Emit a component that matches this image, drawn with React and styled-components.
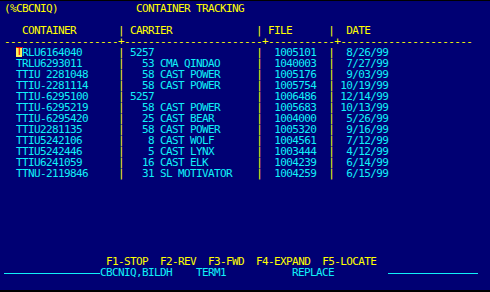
import React from 'react';
import styled, { createGlobalStyle } from 'styled-components';

const GlobalStyle = createGlobalStyle`
  html, body {
    margin: 0;
    padding: 0;
    background: #000;
  }
`;

const YELLOW = '#ffff00';
const CYAN = '#10f0f8';
const CELL = 6;

// Terminal screen, 6px cells on an 11px row grid
const Screen = styled.div`
  box-sizing: border-box;
  width: 490px;
  height: 289px;
  margin-top: 1px;
  padding: 1.5px 0 0 4px;
  background: #000073;
  font-family: "DejaVu Sans Mono", "Liberation Mono", monospace;
  font-size: 11px;
  letter-spacing: -0.62px;
  line-height: 11px;
  overflow: hidden;
`;

const Line = styled.div`
  height: 11px;
  white-space: pre;
`;

const Seg = styled.span`
  color: ${(p) => (p.$tone === 'cyan' ? CYAN : YELLOW)};
`;

const Cursor = styled.span`
  display: inline-block;
  width: ${CELL}px;
  height: 10px;
  line-height: 10px;
  vertical-align: top;
  text-align: center;
  letter-spacing: 0;
  background: #ffef5a;
  color: #e00000;
`;

const Rule = styled.span`
  display: inline-block;
  width: ${(p) => p.$cols * CELL}px;
  height: 1px;
  vertical-align: 2px;
  background: ${CYAN};
`;

const rows = [
  ['TRLU6164040', '5257', '', '1005101', '8/26/99'],
  ['TRLU6293011', '53', 'CMA QINDAO', '1040003', '7/27/99'],
  ['TTIU 2281048', '58', 'CAST POWER', '1005176', '9/03/99'],
  ['TTIU-2281114', '58', 'CAST POWER', '1005754', '10/19/99'],
  ['TTIU-6295100', '5257', '', '1006486', '12/14/99'],
  ['TTIU-6295219', '58', 'CAST POWER', '1005683', '10/13/99'],
  ['TTIU-6295420', '25', 'CAST BEAR', '1004000', '5/26/99'],
  ['TTIU2281135', '58', 'CAST POWER', '1005320', '9/16/99'],
  ['TTIU5242106', '8', 'CAST WOLF', '1004561', '7/12/99'],
  ['TTIU5242446', '5', 'CAST LYNX', '1003444', '4/12/99'],
  ['TTIU6241059', '16', 'CAST ELK', '1004239', '6/14/99'],
  ['TTNU-2119846', '31', 'SL MOTIVATOR', '1004259', '6/15/99'],
];

const dashes = () => {
  const chars = Array(78).fill('-');
  [19, 43, 55].forEach((i) => (chars[i] = '+'));
  return chars.join('');
};

const DataRow = ({ row, cursor }) => {
  const [cont, num, name, file, date] = row;
  const carrier = (num.padStart(4) + (name ? ' ' + name : '')).padEnd(21);
  return (
    <Line>
      <Seg>{'  '}</Seg>
      {cursor ? (
        <>
          <Cursor>{cont[0]}</Cursor>
          <Seg $tone="cyan">{cont.slice(1).padEnd(16)}</Seg>
        </>
      ) : (
        <Seg $tone="cyan">{cont.padEnd(17)}</Seg>
      )}
      <Seg>{'| '}</Seg>
      <Seg $tone="cyan">{carrier}</Seg>
      <Seg>{'|'}</Seg>
      <Seg $tone="cyan">{'  ' + file.padEnd(9)}</Seg>
      <Seg>{'|'}</Seg>
      <Seg $tone="cyan">{' ' + date.padStart(8)}</Seg>
    </Line>
  );
};

export default function App() {
  return (
    <>
      <GlobalStyle />
      <Screen>
        <Line>
          <Seg>{'(%CBCNIQ)' + ' '.repeat(13) + 'CONTAINER TRACKING'}</Seg>
        </Line>
        <Line />
        <Line>
          <Seg>
            {'   CONTAINER       | CARRIER              | FILE      |  DATE'}
          </Seg>
        </Line>
        <Line>
          <Seg>{dashes()}</Seg>
        </Line>
        {rows.map((r, i) => (
          <DataRow key={r[0]} row={r} cursor={i === 0} />
        ))}
        {Array.from({ length: 7 }).map((_, i) => (
          <Line key={'blank' + i} />
        ))}
        <Line>
          <Seg>
            {' '.repeat(17) + 'F1-STOP  F2-REV  F3-FWD  F4-EXPAND  F5-LOCATE'}
          </Seg>
        </Line>
        <Line>
          <Rule $cols={16} />
          <Seg $tone="cyan">
            {'CBCNIQ,BILDH' + ' '.repeat(4) + 'TERM1' + ' '.repeat(11) + 'REPLACE' + ' '.repeat(9)}
          </Seg>
          <Rule $cols={15} />
        </Line>
      </Screen>
    </>
  );
}
